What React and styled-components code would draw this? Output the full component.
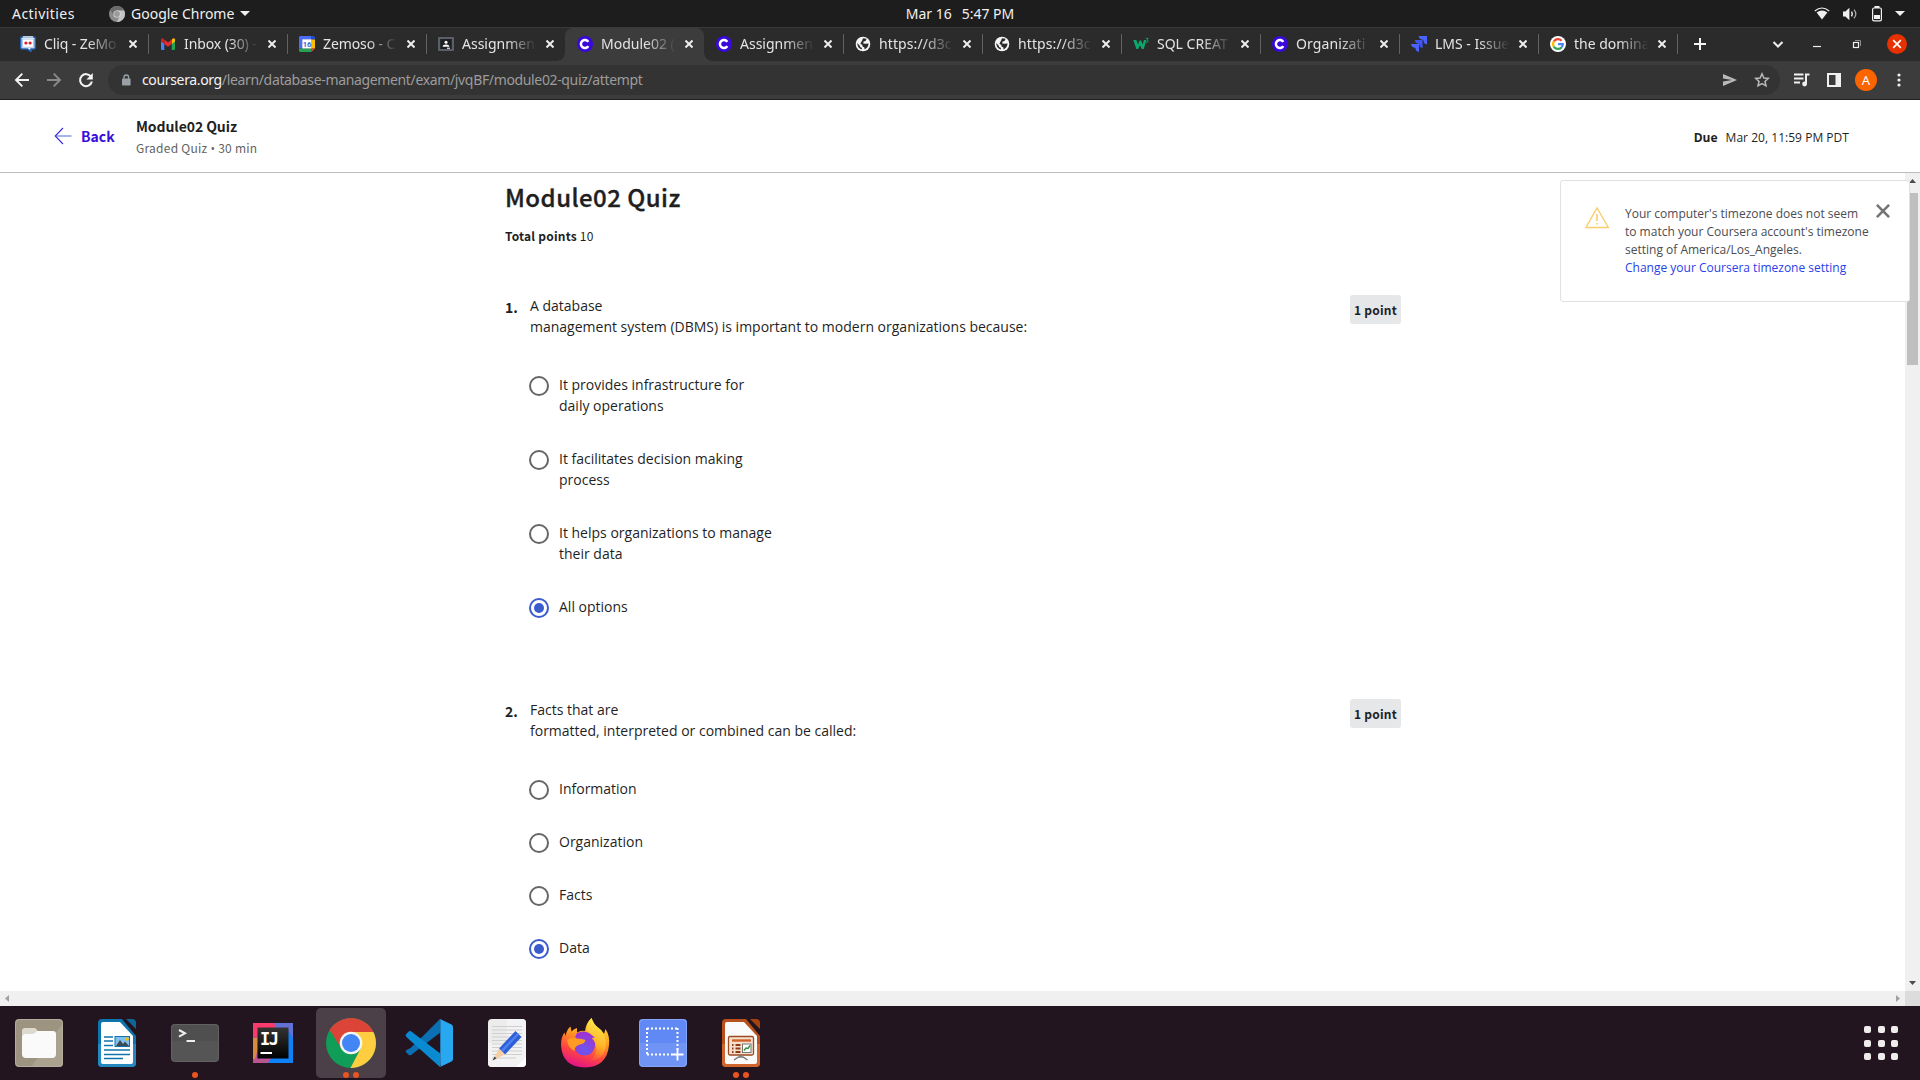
import React from 'react';
import styled, { createGlobalStyle, css } from 'styled-components';

const UI_FONT = '"Noto Sans", "Open Sans", sans-serif';
const BODY_FONT = '"Open Sans", "Noto Sans", sans-serif';
const HEAD_FONT = '"Noto Sans CJK SC", "Noto Sans", sans-serif';

const GlobalStyle = createGlobalStyle`
  * { box-sizing: border-box; }
  html, body { margin: 0; padding: 0; background: #fff; overflow: hidden; }
  svg { display: block; flex: none; }
  p, h1, h2, ul, ol { margin: 0; padding: 0; }
`;

const Screen = styled.div`
  width: 1920px;
  height: 1080px;
  display: flex;
  flex-direction: column;
  overflow: hidden;
  font-family: ${BODY_FONT};
  color: #1f1f1f;
`;

/* ---------- desktop top bar ---------- */
const TopBar = styled.div`
  height: 28px;
  flex: none;
  background: #1d1d1d;
  border-bottom: 1px solid #3a3a3a;
  display: grid;
  grid-template-columns: 1fr auto 1fr;
  align-items: center;
  font-family: ${UI_FONT};
  font-size: 14px;
  line-height: 25px;
  color: #f0f0f0;
  white-space: pre;
`;
const TopLeft = styled.div`
  display: flex;
  align-items: center;
  padding-left: 12px;
`;
const Activities = styled.span`
  width: 97px;
  letter-spacing: 0.45px;
`;
const AppMenu = styled.span`
  display: flex;
  align-items: center;
  gap: 6px;
`;
const Clock = styled.div`
  display: flex;
  gap: 10px;
`;
const Tray = styled.div`
  display: flex;
  align-items: center;
  justify-content: flex-end;
  gap: 13px;
  padding-right: 15px;
`;

/* ---------- tab strip ---------- */
const TabStrip = styled.div`
  height: 33px;
  flex: none;
  background: #2b2b2b;
  display: flex;
  padding-left: 9px;
`;
const TabTitle = styled.span`
  width: 76px;
  margin: 0 8px;
  white-space: nowrap;
  font-family: ${UI_FONT};
  font-size: 14px;
  line-height: 20px;
  letter-spacing: ${(p) => p.$ls || 0}px;
  color: #e4e4e4;
  mask-image: linear-gradient(90deg, #000 58%, transparent 98%);
`;
const Tab = styled.div`
  width: 139px;
  height: 33px;
  display: flex;
  align-items: center;
  padding: 0 0 1px 12px;
  position: relative;
  flex: none;
  &:first-child { padding-left: 11px; }
  &:first-child ${TabTitle} { width: 77px; }
  ${(p) => p.$line && css`
    &::after {
      content: '';
      position: absolute;
      right: -1px;
      top: 6px;
      width: 1px;
      height: 20px;
      background: #626262;
    }
  `}
  ${(p) => p.$active && css`
    background: #3c3c3c;
    border-radius: 8px 8px 0 0;
    &::before, &::after {
      content: '';
      position: absolute;
      bottom: 0;
      width: 8px;
      height: 8px;
    }
    &::before { left: -8px; background: radial-gradient(circle at 0 0, transparent 7.5px, #3c3c3c 8px); }
    &::after { right: -8px; background: radial-gradient(circle at 100% 0, transparent 7.5px, #3c3c3c 8px); }
  `}
`;
const StripSpace = styled.div`
  flex: 1;
`;
const WindowButtons = styled.div`
  display: flex;
  align-items: center;
  padding: 0 13px 1px 0;
  gap: 20px;
`;
const NewTab = styled.div`
  display: flex;
  align-items: center;
  padding: 0 0 1px 17px;
`;

/* ---------- toolbar ---------- */
const Toolbar = styled.div`
  height: 39px;
  flex: none;
  background: #3c3c3c;
  border-bottom: 1px solid #222;
  display: flex;
  align-items: center;
  padding: 0 13px 0 14px;
`;
const NavButtons = styled.div`
  display: flex;
  gap: 16px;
  width: 94px;
`;
const Omnibox = styled.div`
  width: 1672px;
  height: 30px;
  border-radius: 15px;
  background: #333333;
  display: flex;
  align-items: center;
  padding: 0 10px 0 14px;
  font-family: ${UI_FONT};
  font-size: 14px;
  line-height: 20px;
`;
const Url = styled.span`
  margin-left: 11px;
  flex: 1;
  white-space: nowrap;
  color: #9c9c9c;
  letter-spacing: -0.35px;
`;
const UrlHost = styled.span`
  color: #f4f4f4;
`;
const OmniIcons = styled.div`
  display: flex;
  align-items: center;
  gap: 16px;
`;
const ToolIcons = styled.div`
  display: flex;
  align-items: center;
  margin-left: 13px;
`;
const Avatar = styled.div`
  width: 22px;
  height: 22px;
  border-radius: 50%;
  background: #fb6500;
  color: #fff;
  font-family: ${UI_FONT};
  font-size: 13px;
  line-height: 22px;
  text-align: center;
  margin: 0 20px 0 14px;
`;

/* ---------- page header ---------- */
const Header = styled.header`
  height: 73px;
  flex: none;
  background: #fff;
  border-bottom: 1px solid #bdbdbd;
  display: flex;
  align-items: center;
  padding: 0 71px 0 54px;
`;
const Back = styled.span`
  font-family: ${HEAD_FONT};
  font-weight: 700;
  font-size: 14px;
  line-height: 20px;
  color: #3a0ddb;
  width: 55px;
  margin-left: 9px;
`;
const HeaderText = styled.div`
  flex: 1;
  font-family: ${HEAD_FONT};
  padding-top: 3px;
`;
const HeaderTitle = styled.p`
  font-weight: 700;
  font-size: 14px;
  line-height: 21px;
  letter-spacing: -0.08px;
  color: #1f1f1f;
`;
const HeaderSub = styled.p`
  font-size: 12px;
  line-height: 21px;
  letter-spacing: 0.25px;
  color: #636363;
`;
const Bullet = styled.span`
  font-family: ${BODY_FONT};
`;
const Due = styled.p`
  font-size: 12px;
  line-height: 18px;
  letter-spacing: 0.03px;
  padding-top: 3px;
  color: #1f1f1f;
  display: flex;
  gap: 8px;
`;

/* ---------- quiz ---------- */
const Viewport = styled.div`
  flex: 1;
  min-height: 0;
  display: flex;
  position: relative;
  background: #fff;
`;
const Page = styled.main`
  flex: 1;
  overflow: hidden;
  padding: 6px 0 0 505px;
`;
const Quiz = styled.div`
  width: 896px;
`;
const QuizTitle = styled.h1`
  font-family: ${HEAD_FONT};
  font-weight: 500;
  font-size: 24px;
  line-height: 36px;
  letter-spacing: 0.45px;
  -webkit-text-stroke: 0.35px #1f1f1f;
`;
const Total = styled.p`
  font-family: ${HEAD_FONT};
  font-size: 12px;
  line-height: 20px;
  letter-spacing: 0.2px;
  margin-top: 11px;
`;
const Question = styled.section`
  display: flex;
  align-items: flex-start;
  margin-top: ${(p) => p.$top}px;
`;
const Num = styled.span`
  width: 25px;
  font-family: ${HEAD_FONT};
  font-weight: 700;
  font-size: 14px;
  line-height: 21px;
  padding-top: 2px;
`;
const QBody = styled.div`
  flex: 1;
`;
const Prompt = styled.p`
  font-size: 14px;
  line-height: 21px;
  white-space: pre-line;
`;
const Options = styled.ul`
  list-style: none;
  margin-top: 37px;
  display: flex;
  flex-direction: column;
  gap: 32px;
`;
const Option = styled.li`
  display: flex;
  align-items: flex-start;
  gap: 10px;
  font-size: 14px;
  line-height: 21px;
  white-space: pre-line;
`;
const Radio = styled.span`
  width: 20px;
  height: 20px;
  margin: 2px 0 -1px -1px;
  border-radius: 50%;
  border: 2px solid ${(p) => (p.$on ? '#3a5ccc' : '#666')};
  display: grid;
  place-items: center;
  flex: none;
  &::after {
    content: '';
    width: 10px;
    height: 10px;
    border-radius: 50%;
    background: ${(p) => (p.$on ? '#3a5ccc' : 'transparent')};
  }
`;
const Points = styled.span`
  width: 51px;
  height: 29px;
  border-radius: 3px;
  background: #e5e7e8;
  font-family: ${HEAD_FONT};
  font-size: 12px;
  font-weight: 700;
  line-height: 30px;
  letter-spacing: 0.2px;
  text-align: center;
`;

/* ---------- timezone notice ---------- */
const Notice = styled.aside`
  position: absolute;
  left: 1560px;
  top: 7px;
  width: 350px;
  height: 122px;
  background: #fff;
  border: 1px solid #e1e1e1;
  border-radius: 3px;
  display: flex;
  padding: 23px 19px 0 24px;
  z-index: 2;
`;
const NoticeText = styled.div`
  flex: 1;
  margin-left: 15px;
  padding-top: 1px;
  font-size: 12px;
  line-height: 18px;
  color: #4a4c52;
  white-space: pre;
`;
const NoticeLink = styled.p`
  color: #2a41e8;
`;

/* ---------- scrollbars ---------- */
const VBar = styled.div`
  width: 15px;
  background: #f0f0f0;
  display: flex;
  flex-direction: column;
  justify-content: space-between;
  align-items: center;
  padding: 6px 0;
`;
const VThumb = styled.div`
  width: 11px;
  height: 172px;
  margin: 10px 0 auto;
  background: #bfbfbf;
`;
const HBar = styled.div`
  height: 15px;
  flex: none;
  background: #f0f0f0;
  display: flex;
  justify-content: space-between;
  align-items: center;
  padding-left: 5px;
`;
const HEnd = styled.div`
  display: flex;
  align-items: center;
  gap: 5px;
`;
const Corner = styled.div`
  width: 15px;
  height: 15px;
  background: #dcdcdc;
`;

/* ---------- dock ---------- */
const Dock = styled.div`
  height: 74px;
  flex: none;
  background: #23151f;
  display: flex;
  align-items: center;
  gap: 8px;
  padding: 0 22px 0 4px;
`;
const DockItem = styled.div`
  width: 70px;
  height: 70px;
  border-radius: 5px;
  display: grid;
  place-items: center;
  position: relative;
  background: ${(p) => (p.$active ? '#4b3f48' : 'transparent')};
`;
const Running = styled.div`
  position: absolute;
  left: 0;
  right: 0;
  bottom: 0;
  display: flex;
  justify-content: center;
  gap: 4px;
`;
const Dot = styled.i`
  width: 6px;
  height: 6px;
  border-radius: 50%;
  background: #e95420;
`;
const AppsGrid = styled.div`
  margin-left: auto;
  display: grid;
  grid-template-columns: repeat(3, 7px);
  gap: 6.5px;
`;
const AppsDot = styled.i`
  width: 7px;
  height: 7px;
  border-radius: 2px;
  background: #efedec;
`;

/* ---------- icons ---------- */
const Tri = ({ w = 10, h = 5, color = '#f0f0f0', dir = 'down' }) => {
  const pts = {
    down: `0,0 ${w},0 ${w / 2},${h}`,
    up: `0,${h} ${w},${h} ${w / 2},0`,
    left: `${w},0 ${w},${h} 0,${h / 2}`,
    right: `0,0 0,${h} ${w},${h / 2}`,
  }[dir];
  return <svg width={w} height={h}><polygon points={pts} fill={color} /></svg>;
};

const ChromeIcon = ({ size, gray }) => {
  const c = gray ? ['#6b6b6b', '#8c8c8c', '#c4c4c4', '#9a9a9a', '#e0e0e0'] : ['#db4437', '#0f9d58', '#ffcd40', '#4285f4', '#f5f5f5'];
  return (
    <svg width={size} height={size} viewBox="0 0 50 50">
      <circle cx="25" cy="25" r="25" fill={c[1]} />
      <path d="M25 25 L3.4 12.5 A25 25 0 0 1 46.6 12.5 L47.3 14 L25 14 Z" fill={c[0]} />
      <path d="M25 14 L47.4 14 A25 25 0 0 1 24.5 50 L34.7 30.5 Z" fill={c[2]} />
      <path d="M3.8 12 L15.3 30.5 L25 14 Z" fill={c[0]} />
      <circle cx="25" cy="25" r="11.3" fill={c[4]} />
      <circle cx="25" cy="25" r="9" fill={c[3]} />
    </svg>
  );
};

const Wifi = () => (
  <svg width="16" height="14" viewBox="0 0 16 14">
    <path d="M0.8 4 Q8 -2 15.2 4" fill="none" stroke="#f0f0f0" strokeWidth="1.1" />
    <path d="M2.6 5.6 Q8 1.6 13.4 5.6 L8 12.6 Z" fill="#f0f0f0" />
  </svg>
);
const Volume = () => (
  <svg width="16" height="14" viewBox="0 0 16 14">
    <path d="M0 4.5 H2.4 L6.4 0.8 V13.2 L2.4 9.5 H0 Z" fill="#f0f0f0" />
    <path d="M8.6 4.6 Q10 7 8.6 9.4" fill="none" stroke="#f0f0f0" strokeWidth="1.4" />
    <path d="M11 2.6 Q14.6 7 11 11.4" fill="none" stroke="#a9a9a9" strokeWidth="1.3" />
  </svg>
);
const Battery = () => (
  <svg width="10" height="16" viewBox="0 0 10 16">
    <rect x="0.6" y="2" width="8.8" height="12.8" rx="1.4" fill="none" stroke="#f0f0f0" strokeWidth="1.2" />
    <rect x="2.5" y="0" width="5" height="2" fill="#f0f0f0" />
    <rect x="2" y="9" width="6" height="4" fill="#f0f0f0" />
  </svg>
);
const Close = ({ size = 8, color = '#ededed', w = 2 }) => (
  <svg width={size} height={size} viewBox="0 0 8 8">
    <path d="M0.5 0.5 L7.5 7.5 M7.5 0.5 L0.5 7.5" stroke={color} strokeWidth={w} />
  </svg>
);

const Coursera = () => (
  <svg width="16" height="16" viewBox="0 0 16 16">
    <circle cx="8" cy="8" r="8" fill="#3a08dc" />
    <path d="M11.3 5.9 A4 4 0 1 0 11.3 10.1" fill="none" stroke="#fff" strokeWidth="2.5" />
  </svg>
);
const Globe = () => (
  <svg width="16" height="16" viewBox="0 0 16 16">
    <circle cx="8" cy="8" r="7.3" fill="#f5f5f5" />
    <path d="M8 2.3 L11.6 2.8 L10.6 5 L8.6 5.6 L8.2 7.4 L10.6 7.8 L13.6 7.6 Q13.4 11.6 9.6 13.4 L9.4 11.4 L7.6 10.6 L7.2 8.8 L5.4 8 L6 6.4 L7 4.8 Z" fill="#2b2b2b" />
    <path d="M2.2 7 L4.6 9.4 L5.2 11 L7 12 L6.6 13.6 Q2.4 12 2.2 7 Z" fill="#2b2b2b" />
  </svg>
);
const favicons = {
  cliq: (
    <svg width="16" height="16" viewBox="0 0 16 16">
      <path d="M2 1 H14 Q15.2 1 15.2 2.2 V11.8 Q15.2 13 14 13 H11 V15.5 L7.5 13 H2 Q0.8 13 0.8 11.8 V2.2 Q0.8 1 2 1 Z" fill="#fff" stroke="#2361b4" strokeWidth="1.6" />
      <path d="M3 0.2 H13 V1.6 H3 Z" fill="#dfe8f4" />
      <path d="M2.5 3 H13.5 V11.3 H2.5 Z" fill="none" stroke="#9dbbe0" strokeWidth="0.8" />
      <circle cx="5.9" cy="7" r="1.6" fill="#e01c24" />
      <circle cx="10.1" cy="7" r="1.6" fill="#e01c24" />
    </svg>
  ),
  gmail: (
    <svg width="16" height="16" viewBox="0 0 16 16">
      <path d="M1 4 V13 Q1 14 2 14 H4.3 V6.5 Z" fill="#4285f4" />
      <path d="M15 4 V13 Q15 14 14 14 H11.7 V6.5 Z" fill="#23a455" />
      <path d="M11.7 3.6 V8 L15 5.4 V3.5 Q14.6 1.4 12.6 2.7 Z" fill="#fbbc04" />
      <path d="M4.3 3.6 L8 6.4 L11.7 3.6 V8 L8 10.8 L4.3 8 Z" fill="#ea2a2f" />
      <path d="M1 5.4 L4.3 8 V3.6 L3.4 2.7 Q1.4 1.4 1 3.5 Z" fill="#c5221f" />
    </svg>
  ),
  calendar: (
    <svg width="16" height="16" viewBox="0 0 16 16">
      <path d="M1 0 H12.5 V3.5 H3.5 V12.5 H0 V1 Z" fill="#4a6cf7" />
      <path d="M12.5 0 H15 L16 1 V3.5 H12.5 Z" fill="#1e4fd0" />
      <rect x="12.5" y="3.5" width="3.5" height="9" fill="#fbbc04" />
      <path d="M0 12.5 H12.5 V16 H1 L0 15 Z" fill="#23a455" />
      <path d="M12.5 12.5 H16 L12.5 16 Z" fill="#ea4335" />
      <rect x="3.3" y="3.3" width="9.2" height="9.2" fill="#fff" />
      <text x="8" y="10.8" fontSize="7.5" fontWeight="700" fontFamily="Roboto, sans-serif" fill="#3367d6" textAnchor="middle">16</text>
    </svg>
  ),
  classroom: (
    <svg width="16" height="16" viewBox="0 0 16 16">
      <rect x="0" y="1" width="16" height="14" rx="1" fill="#5b6068" />
      <rect x="2.2" y="3" width="11.6" height="10" fill="#1e1f22" />
      <circle cx="8" cy="6.3" r="1.5" fill="#fff" />
      <path d="M4.6 10.8 Q4.8 8.6 8 8.6 Q11.2 8.6 11.4 10.8 Z" fill="#fff" />
      <rect x="9" y="11.6" width="3" height="1.4" fill="#c8cacc" />
    </svg>
  ),
  coursera: <Coursera />,
  globe: <Globe />,
  w3: (
    <svg width="16" height="16" viewBox="0 0 16 16">
      <path d="M0.2 4 H3.4 L5 8.4 L6.6 4.6 H8.2 L9.6 8.4 L11 4 H13.4 L10.8 13 H8.8 L7 9.2 L5.2 13 H3.4 Z" fill="#0aa86a" />
      <path d="M12.6 2.4 H15.2 L14 4 Q15.8 4.4 15 5.8 Q14.2 6.8 12.8 6" fill="none" stroke="#0aa86a" strokeWidth="0.9" />
    </svg>
  ),
  jira: (
    <svg width="16" height="16" viewBox="0 0 16 16">
      <path d="M7.6 0 H16 V8.4 Q12.6 8.2 12.4 4 Q8 3.6 7.6 0 Z" fill="#4a62ff" />
      <path d="M3.8 4 H11.6 V12.2 Q8.4 12 8.2 8 Q4 7.6 3.8 4 Z" fill="#3f55ea" />
      <path d="M0 8 H8 V16 Q4.6 15.6 4.4 12 Q0.4 11.6 0 8 Z" fill="#4a62ff" />
    </svg>
  ),
  google: (
    <svg width="16" height="16" viewBox="0 0 16 16">
      <circle cx="8" cy="8" r="8" fill="#fff" />
      <path d="M3.9 5.3 A5 5 0 0 1 11.6 4.7" fill="none" stroke="#ea4335" strokeWidth="2.2" />
      <path d="M3.8 10.6 A5 5 0 0 1 3.9 5.3" fill="none" stroke="#fbbc04" strokeWidth="2.2" />
      <path d="M11.4 11.6 A5 5 0 0 1 3.8 10.6" fill="none" stroke="#34a853" strokeWidth="2.2" />
      <path d="M8 8.1 H12.9 Q12.9 10.2 11.3 11.7" fill="none" stroke="#4285f4" strokeWidth="2.1" />
    </svg>
  ),
};

const Files = () => (
  <svg width="48" height="48" viewBox="0 0 48 48">
    <rect width="48" height="48" rx="4" fill="#9c9380" />
    <path d="M16 48 L48 4 V44 Q48 48 44 48 Z" fill="#aaa18f" />
    <rect x="0.5" y="0.5" width="47" height="47" rx="4" fill="none" stroke="#b4ad9e" />
    <path d="M7 12 Q7 9 10 9 H19 Q21 9 22 11 L24 14 V20 H7 Z" fill="#ded9cf" />
    <path d="M7 19 Q7 15 11 15 H17 Q20 15 22 12 H38 Q41 12 41 15 V35 Q41 39 37 39 H11 Q7 39 7 35 Z" fill="#fafafa" />
  </svg>
);
const Writer = () => (
  <svg width="38" height="48" viewBox="0 0 38 48">
    <path d="M4 0 H24 L38 17 V44 Q38 48 34 48 H4 Q0 48 0 44 V4 Q0 0 4 0 Z" fill="#0f74ad" />
    <path d="M0 25 H38 V44 Q38 48 34 48 H4 Q0 48 0 44 Z" fill="#2589bf" />
    <path d="M28 0 H34 Q38 0 38 4 V10 Z" fill="#0d6699" />
    <path d="M5 3 H22 L35 17 V43 Q35 45 33 45 H5 Q3 45 3 43 V5 Q3 3 5 3 Z" fill="#fff" />
    <path d="M6 18 H15 M6 22 H15 M6 26.5 H15 M6 31 H32 M6 35.5 H32 M6 39.5 H25" stroke="#0f74ad" strokeWidth="1.7" />
    <rect x="17" y="17.5" width="14.5" height="10" fill="#7fc0ef" stroke="#0f74ad" />
    <path d="M18 27 L22 21 L25 25 L27 22.5 L31 27 Z" fill="#3d4a52" />
    <circle cx="29" cy="20" r="1.7" fill="#f0c000" />
  </svg>
);
const Terminal = () => (
  <svg width="48" height="38" viewBox="0 0 48 38">
    <rect width="48" height="38" rx="4" fill="#555" />
    <path d="M0 17 V4 Q0 0 4 0 H44 Q48 0 48 4 V17 Z" fill="#4f4f4f" />
    <rect x="0.5" y="0.5" width="47" height="37" rx="4" fill="none" stroke="#626262" />
    <path d="M8 6 L14 9.3 L8 12.6" fill="none" stroke="#eee" strokeWidth="2" />
    <path d="M15.5 17 H24" stroke="#eee" strokeWidth="2" />
  </svg>
);
const Idea = () => (
  <svg width="40" height="40" viewBox="0 0 40 40">
    <rect width="40" height="40" fill="#b95592" />
    <path d="M0 0 H24 L16 14 H0 Z" fill="#fc3a6c" />
    <path d="M21 0 H40 V22 H30 Z" fill="#6370d4" />
    <path d="M36 8 L40 16 V40 H15 Z" fill="#0f80f5" />
    <path d="M0 15 H8 L2 36 H0 Z" fill="#d98a3c" />
    <defs><linearGradient id="ij" x2="0" y2="1"><stop offset="0" stopColor="#333" /><stop offset="1" stopColor="#000" /></linearGradient></defs>
    <rect x="4.5" y="4.5" width="31" height="31" fill="url(#ij)" />
    <text x="7" y="22" fontSize="17" fontWeight="700" fontFamily='"DejaVu Sans Mono", monospace' fill="#fff" letterSpacing="-1.6">IJ</text>
    <rect x="7.5" y="29" width="11.5" height="2" fill="#fff" />
  </svg>
);
const VsCode = () => (
  <svg width="48" height="48" viewBox="0 0 48 48">
    <path d="M35 0 L15 20 L5.5 29 L0.8 31.5 L0.8 33 L4 36 Q5 36.6 6 36 L35.3 13.5 Z" fill="#0a6fb3" />
    <path d="M35 48 L3 19.5 Q0 17 0.8 15.6 L4 12.3 Q5 11.6 6 12.3 L35.3 34.5 Z" fill="#0a8ad2" />
    <path d="M35 0 L46.5 5.5 Q48 6.3 48 8 V40 Q48 41.7 46.5 42.4 L35 48 Q36 47 35.3 45 V2 Z" fill="#28a8f0" />
  </svg>
);
const Editor = () => (
  <svg width="38" height="48" viewBox="0 0 38 48">
    <rect width="38" height="48" rx="4" fill="#ececec" />
    <path d="M19 0 H34 Q38 0 38 4 V38 L28 48 H4 Q0 48 0 44 V24 H19 Z" fill="#f3f3f3" />
    <path d="M4 7.5 H34 M4 11 H34 M4 14.5 H34 M4 18 H34 M4 21.5 H34 M4 25 H34 M4 28.5 H34 M4 32 H34 M4 35.5 H34 M4 39 H28" stroke="#cfcfcf" strokeWidth="1" />
    <path d="M38 38 L28 48 H34 Q38 48 38 44 Z" fill="#fff" />
    <path d="M27.5 12 L33.5 18 L17 35.5 L11 29.5 Z" fill="#2c5fd8" />
    <path d="M29.5 14 L31 15.5 L15 33 L13 31 Z" fill="#4f80ee" />
    <path d="M11 29.5 L17 35.5 L5 41 Z" fill="#f7cda4" />
    <path d="M6.5 37.5 L8.5 39.6 L4.5 41.5 Z" fill="#444" />
  </svg>
);
const Firefox = () => (
  <svg width="50" height="50" viewBox="0 0 50 50">
    <defs>
      <linearGradient id="fx" x1="0.7" y1="0" x2="0.35" y2="1"><stop offset="0.05" stopColor="#ffdf3d" /><stop offset="0.4" stopColor="#ff9a20" /><stop offset="0.7" stopColor="#ff4740" /><stop offset="1" stopColor="#e3128a" /></linearGradient>
      <linearGradient id="fy" x1="0.7" y1="0" x2="0.5" y2="1"><stop offset="0" stopColor="#fff44f" /><stop offset="0.6" stopColor="#ffb52a" /><stop offset="1" stopColor="#ff8a25" stopOpacity="0.2" /></linearGradient>
      <radialGradient id="fp" cx="0.5" cy="0.8" r="0.8"><stop offset="0" stopColor="#6a58f0" /><stop offset="1" stopColor="#a22fd0" /></radialGradient>
    </defs>
    <path d="M31.5 0 Q34 7 38 9.5 Q42 12 44 16 L45.5 11 Q50 18 49 27 Q47 49 25 49.5 Q2 49 1 27 Q1 19 4.5 14.5 L5.5 18 Q7 11 10.5 8.5 L11.5 13.5 Q14 10.5 17 10 L17 14.5 Q21 12 25 13 Q26 5 31.5 0 Z" fill="url(#fx)" />
    <path d="M31.5 0 Q34 7 38 9.5 Q46 15 46 27 Q44 42 30 43 Q40 34 34 22 Q25 14 27 8 Q28.5 3 31.5 0 Z" fill="url(#fy)" />
    <path d="M17 15 Q24 12 29 15 L35 19.5 L31.5 20 Q36.5 24 34.5 30 Q32 37.5 24.5 37.5 Q15 37 14.5 28 Q14.5 18 17 15 Z" fill="url(#fp)" />
    <path d="M7 22 Q13 18 17 20.5 Q22 20.5 25.5 22 Q25 25.5 20 26.5 Q14 28 14.5 33 Q8 30 7 22 Z" fill="#ff9b22" />
  </svg>
);
const Shot = () => (
  <svg width="48" height="48" viewBox="0 0 48 48">
    <rect width="48" height="48" rx="4" fill="#7094f6" />
    <path d="M0 24 V4 Q0 0 4 0 H44 Q48 0 48 4 V24 Z" fill="#6189f5" />
    <rect x="0.5" y="0.5" width="47" height="47" rx="4" fill="none" stroke="#84a4f8" />
    <path d="M8 9.5 H39 M8 35.5 H33" fill="none" stroke="#fff" strokeWidth="2" strokeDasharray="2 2" />
    <path d="M8 9 V36 M38.5 9 V31" fill="none" stroke="#fff" strokeWidth="2" strokeDasharray="2 2" />
    <path d="M38.5 29.5 V41.5 M32.5 35.5 H44.5" stroke="#fff" strokeWidth="1.8" />
  </svg>
);
const Impress = () => (
  <svg width="38" height="48" viewBox="0 0 38 48">
    <path d="M4 0 H24 L38 17 V44 Q38 48 34 48 H4 Q0 48 0 44 V4 Q0 0 4 0 Z" fill="#b8501c" />
    <path d="M0 25 H38 V44 Q38 48 34 48 H4 Q0 48 0 44 Z" fill="#d0662e" />
    <path d="M28 0 H34 Q38 0 38 4 V10 Z" fill="#a5430f" />
    <path d="M5 3 H22 L35 17 V43 Q35 45 33 45 H5 Q3 45 3 43 V5 Q3 3 5 3 Z" fill="#fafafa" />
    <rect x="6.5" y="17.5" width="25" height="18.5" rx="1.5" fill="#f6e0d0" stroke="#9c4a20" strokeWidth="1.3" />
    <path d="M10 21.5 H29" stroke="#d2622a" strokeWidth="2.4" />
    <path d="M10 26 H11.5 M10 29.5 H11.5 M10 33 H11.5 M13.5 26 H18.5 M13.5 29.5 H18.5 M13.5 33 H18.5" stroke="#8f3a10" strokeWidth="2" />
    <rect x="20.5" y="25" width="8.5" height="8.5" fill="#fff" stroke="#777" />
    <path d="M22 31.5 L24 29 L26 29.5 L28 26.5" fill="none" stroke="#2e9a3a" strokeWidth="1.5" />
    <path d="M18.5 36 V38 M12 41 L16.5 38 H21 L25.5 41" fill="none" stroke="#777" strokeWidth="1.4" />
  </svg>
);

const tabs = [
  { icon: 'cliq', title: 'Cliq - ZeMo', ls: -0.1, line: true },
  { icon: 'gmail', title: 'Inbox (30) -', ls: -0.1, line: true },
  { icon: 'calendar', title: 'Zemoso - C', ls: -0.1, line: true },
  { icon: 'classroom', title: 'Assignmen' },
  { icon: 'coursera', title: 'Module02 (', active: true },
  { icon: 'coursera', title: 'Assignmen', line: true },
  { icon: 'globe', title: 'https://d3c', ls: 0.1, line: true },
  { icon: 'globe', title: 'https://d3c', ls: 0.1, line: true },
  { icon: 'w3', title: 'SQL CREAT', line: true },
  { icon: 'coursera', title: 'Organizati', ls: 0.1, line: true },
  { icon: 'jira', title: 'LMS - Issue', line: true },
  { icon: 'google', title: 'the domina', line: true },
];

const questions = [
  {
    prompt: 'A database\nmanagement system (DBMS) is important to modern organizations because:',
    options: ['It provides infrastructure for\ndaily operations', 'It facilitates decision making\nprocess', 'It helps organizations to manage\ntheir data', 'All options'],
    answer: 3,
    top: 49,
  },
  {
    prompt: 'Facts that are\nformatted, interpreted or combined can be called:',
    options: ['Information', 'Organization', 'Facts', 'Data'],
    answer: 3,
    top: 82,
  },
];

const dock = [
  { icon: <Files /> },
  { icon: <Writer /> },
  { icon: <Terminal />, dots: 1 },
  { icon: <Idea /> },
  { icon: <ChromeIcon size={50} />, dots: 2, active: true },
  { icon: <VsCode /> },
  { icon: <Editor /> },
  { icon: <Firefox /> },
  { icon: <Shot /> },
  { icon: <Impress />, dots: 2 },
];

export default function App() {
  return (
    <Screen>
      <GlobalStyle />
      <TopBar>
        <TopLeft>
          <Activities>Activities</Activities>
          <AppMenu><ChromeIcon size={16} gray /><span>Google Chrome</span><Tri /></AppMenu>
        </TopLeft>
        <Clock><span>Mar 16</span><span>5:47 PM</span></Clock>
        <Tray><Wifi /><Volume /><Battery /><Tri /></Tray>
      </TopBar>

      <TabStrip>
        {tabs.map((t, i) => (
          <Tab key={i} $line={t.line} $active={t.active}>
            {favicons[t.icon]}
            <TabTitle $ls={t.ls}>{t.title}</TabTitle>
            <Close />
          </Tab>
        ))}
        <NewTab>
          <svg width="12" height="12"><path d="M6 0 V12 M0 6 H12" stroke="#f5f5f5" strokeWidth="2" /></svg>
        </NewTab>
        <StripSpace />
        <WindowButtons>
          <svg width="20" height="20"><path d="M6.5 8 L11 12.5 L15.5 8" fill="none" stroke="#eee" strokeWidth="2" /></svg>
          <svg width="20" height="20"><path d="M6 12.5 H14" stroke="#eee" strokeWidth="1.2" /></svg>
          <svg width="20" height="20"><path d="M8 6.5 H13.5 V12" fill="none" stroke="#8d8d8d" /><rect x="6.5" y="8.5" width="5" height="5" fill="none" stroke="#eee" strokeWidth="1.2" /></svg>
          <svg width="20" height="20"><circle cx="10" cy="10" r="10" fill="#e83100" /><path d="M6.2 6.2 L13.8 13.8 M13.8 6.2 L6.2 13.8" stroke="#fff" strokeWidth="1.7" /></svg>
        </WindowButtons>
      </TabStrip>

      <Toolbar>
        <NavButtons>
          <svg width="16" height="16"><path d="M15 8 H2.2 M8.3 1.7 L2 8 L8.3 14.3" fill="none" stroke="#f3f3f3" strokeWidth="1.9" /></svg>
          <svg width="16" height="16"><path d="M1 8 H13.8 M7.7 1.7 L14 8 L7.7 14.3" fill="none" stroke="#8a8a8a" strokeWidth="1.9" /></svg>
          <svg width="16" height="16"><path d="M13.2 5 A6 6 0 1 0 13.9 9.5" fill="none" stroke="#f3f3f3" strokeWidth="2" /><path d="M14.8 1 V7.4 H8.4 Z" fill="#f3f3f3" /></svg>
        </NavButtons>
        <Omnibox>
          <svg width="9" height="12"><rect x="0" y="4.5" width="8.6" height="7" rx="1" fill="#9aa0a6" /><path d="M2 5 V3.2 Q2 1 4.3 1 Q6.6 1 6.6 3.2 V5" fill="none" stroke="#9aa0a6" strokeWidth="1.3" /></svg>
          <Url><UrlHost>coursera.org</UrlHost>/learn/database-management/exam/jvqBF/module02-quiz/attempt</Url>
          <OmniIcons>
            <svg width="16" height="14"><path d="M1 1 L15 7 L1 13 V8.4 L10 7 L1 5.6 Z" fill="#b9b9b9" /></svg>
            <svg width="16" height="16" viewBox="0 0 16 16"><path d="M8 1.8 L9.9 6 L14.3 6.4 L11 9.4 L12 13.8 L8 11.5 L4 13.8 L5 9.4 L1.7 6.4 L6.1 6 Z" fill="none" stroke="#b9b9b9" strokeWidth="1.5" /></svg>
          </OmniIcons>
        </Omnibox>
        <ToolIcons>
          <svg width="17" height="14"><path d="M1 1.5 H10.5 M1 5.5 H10.5 M1 9.5 H7" stroke="#f0f0f0" strokeWidth="1.8" /><path d="M13 11 V1.6 H16.5" fill="none" stroke="#f0f0f0" strokeWidth="2" /><circle cx="11.6" cy="11" r="2.4" fill="#f0f0f0" /></svg>
          <svg width="31" height="14"><path d="M17 0 H31 V14 H17 Z M19 2 V12 H25.5 V2 Z" fill="#f0f0f0" fillRule="evenodd" /></svg>
          <Avatar>A</Avatar>
          <svg width="4" height="14"><circle cx="2" cy="2" r="1.6" fill="#f0f0f0" /><circle cx="2" cy="7" r="1.6" fill="#f0f0f0" /><circle cx="2" cy="12" r="1.6" fill="#f0f0f0" /></svg>
        </ToolIcons>
      </Toolbar>

      <Header>
        <svg width="18" height="18"><path d="M17.5 9 H1.5" stroke="#7d93ea" strokeWidth="1.4" /><path d="M9 1 L1.2 9 L9 17" fill="none" stroke="#3a2bdc" strokeWidth="1.1" /></svg>
        <Back>Back</Back>
        <HeaderText>
          <HeaderTitle>Module02 Quiz</HeaderTitle>
          <HeaderSub>Graded Quiz <Bullet>•</Bullet> 30 min</HeaderSub>
        </HeaderText>
        <Due><b>Due</b><span>Mar 20, 11:59 PM PDT</span></Due>
      </Header>

      <Viewport>
        <Page>
          <Quiz>
            <QuizTitle>Module02 Quiz</QuizTitle>
            <Total><b>Total points</b> 10</Total>
            {questions.map((q, i) => (
              <Question key={i} $top={q.top}>
                <Num>{i + 1}.</Num>
                <QBody>
                  <Prompt>{q.prompt}</Prompt>
                  <Options>
                    {q.options.map((o, j) => (
                      <Option key={o}><Radio $on={j === q.answer} /><span>{o}</span></Option>
                    ))}
                  </Options>
                </QBody>
                <Points>1 point</Points>
              </Question>
            ))}
          </Quiz>
        </Page>
        <VBar>
          <Tri w={7} h={4} dir="up" color="#4c4c4c" />
          <VThumb />
          <Tri w={7} h={4} color="#4c4c4c" />
        </VBar>
        <Notice>
          <svg width="25" height="26"><path d="M12 4 L23.3 23.5 H0.9 Z" fill="none" stroke="#f8ce6c" strokeWidth="1.4" /><path d="M12 10 V17 M12 19 V20.6" stroke="#f8ce6c" strokeWidth="1.6" /></svg>
          <NoticeText>
            <p>{"Your computer's timezone does not seem\nto match your Coursera account's timezone\nsetting of America/Los_Angeles."}</p>
            <NoticeLink>Change your Coursera timezone setting</NoticeLink>
          </NoticeText>
          <Close size={14} color="#757575" w={1.5} />
        </Notice>
      </Viewport>
      <HBar>
        <Tri w={4} h={7} dir="left" color="#a0a0a0" />
        <HEnd><Tri w={4} h={7} dir="right" color="#a0a0a0" /><Corner /></HEnd>
      </HBar>

      <Dock>
        {dock.map((d, i) => (
          <DockItem key={i} $active={d.active}>
            {d.icon}
            {d.dots && <Running>{Array.from({ length: d.dots }, (_, k) => <Dot key={k} />)}</Running>}
          </DockItem>
        ))}
        <AppsGrid>{Array.from({ length: 9 }, (_, k) => <AppsDot key={k} />)}</AppsGrid>
      </Dock>
    </Screen>
  );
}
